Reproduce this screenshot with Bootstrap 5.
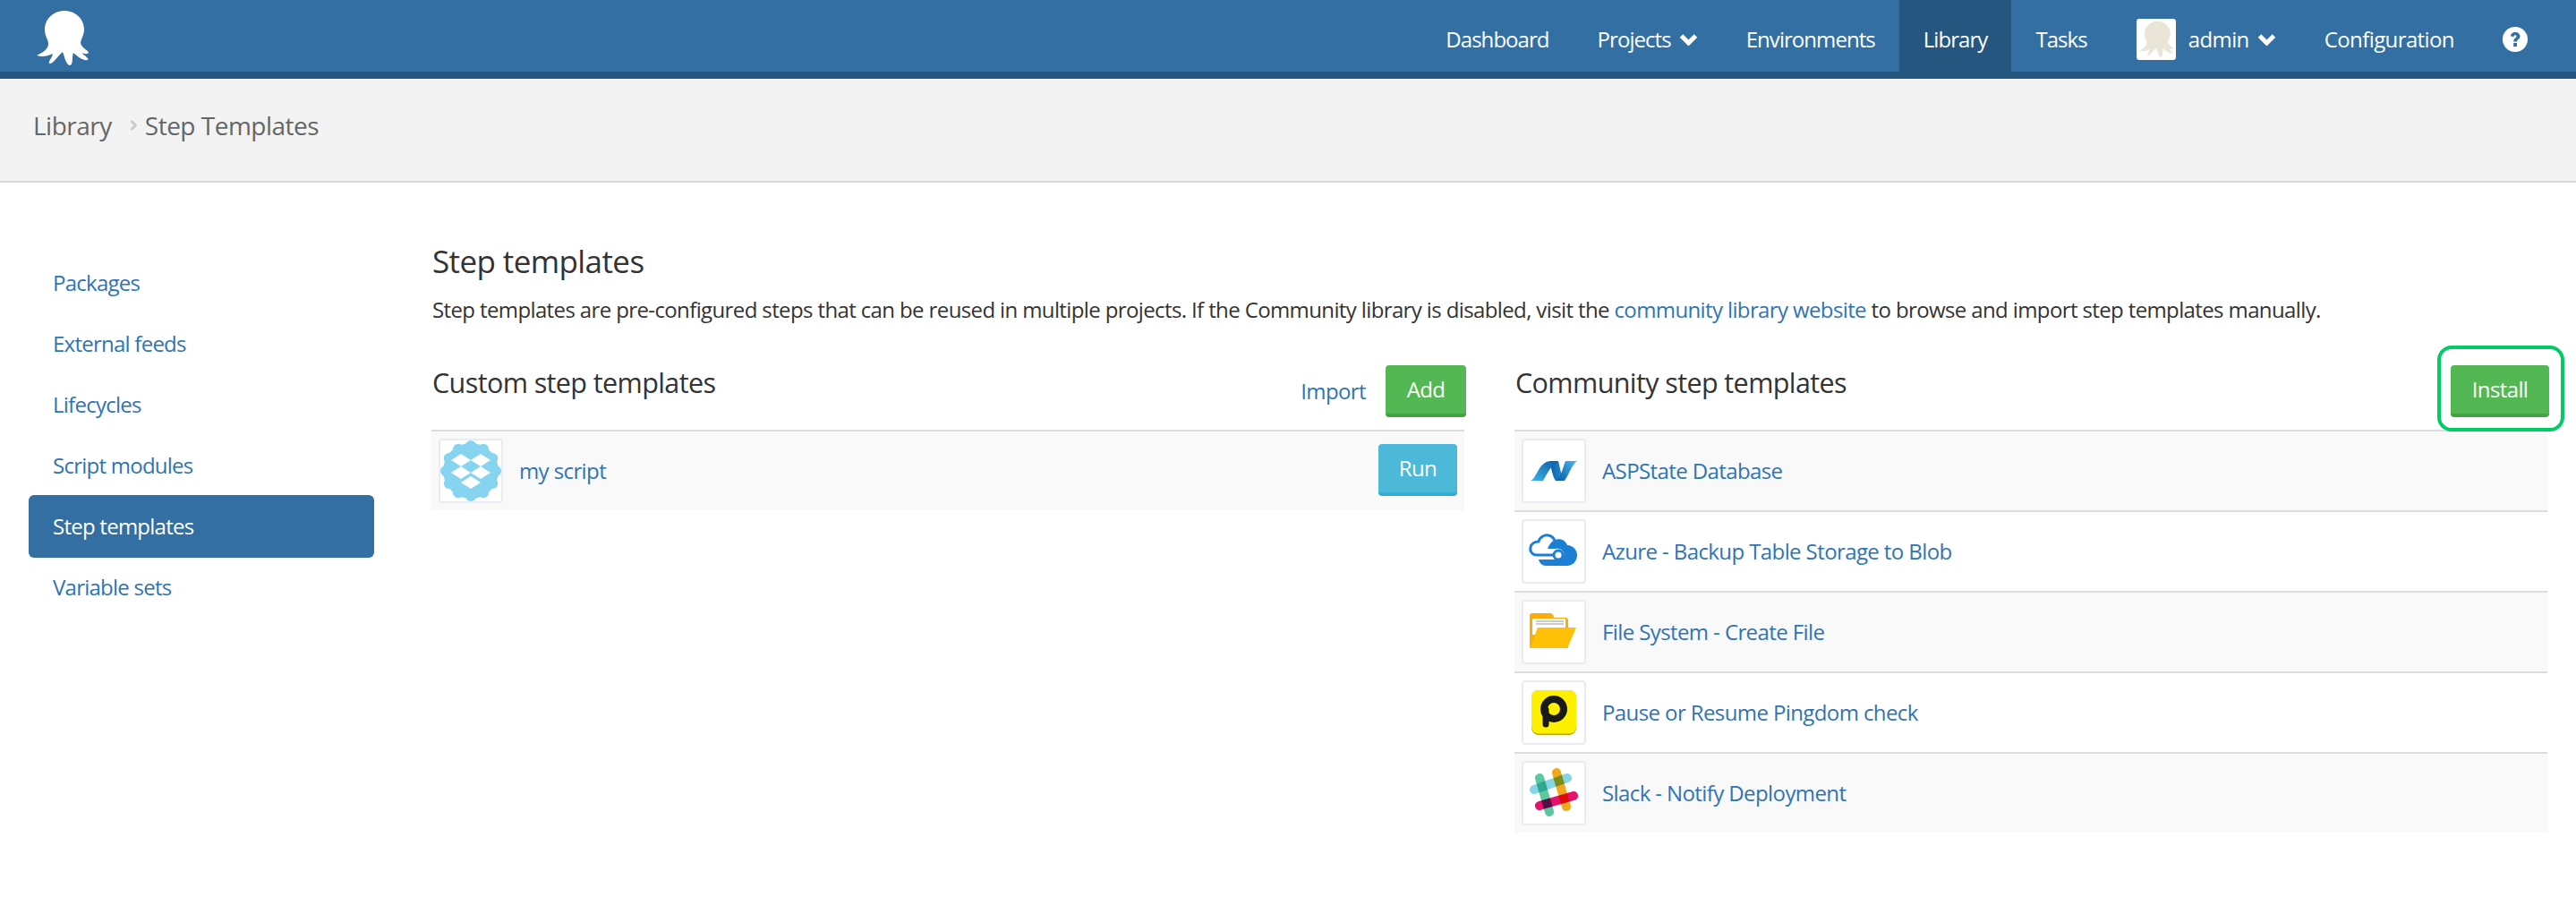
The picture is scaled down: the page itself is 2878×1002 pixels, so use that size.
<!DOCTYPE html>
<html lang="en">
<head>
    <meta charset="UTF-8">
    <meta name="viewport" content="width=device-width, initial-scale=1.0">
    <title>Step Templates</title>
    <link href="https://cdn.jsdelivr.net/npm/bootstrap@5.3.2/dist/css/bootstrap.min.css" rel="stylesheet">
    <script src="https://cdn.jsdelivr.net/npm/bootstrap@5.3.2/dist/js/bootstrap.bundle.min.js"></script>
    <style>
        body { font-family: "Open Sans", sans-serif; font-size: 24px; color: #333; letter-spacing: -0.6px; }
        a { color: #2f74b5; text-decoration: none; }

        .top-bar { height: 88px; background: #336fa2; border-bottom: 8px solid #24567f; padding: 0 54px 0 40px; }
        .top-bar .logo-svg { width: 60px; height: 62px; margin-top: 12px; }
        .top-links { height: 80px; letter-spacing: -0.95px; }
        .top-links a { color: #fff; padding: 0 27px; height: 88px; display: flex; align-items: center; gap: 9px; }
        .top-links a.on { background: #24567f; }
        .top-links a.user-link { padding-left: 28px; letter-spacing: -0.6px; }
        .top-links a.conf-link { letter-spacing: -0.6px; }
        .top-links a.help-link { padding-right: 0; }
        .avatar-box { width: 44px; height: 46px; background: #fff; border-radius: 3px; display: block; margin-right: 5px; }
        .help-svg { width: 28px; height: 28px; }
        .chev { width: 21px; height: 14px; }

        .crumb-bar { height: 116px; background: #f3f3f3; border-bottom: 2px solid #d8d8d8; padding-left: 37px; padding-bottom: 11px; font-size: 28px; color: #666; letter-spacing: -0.5px; }
        .crumb-sep { width: 8px; height: 14px; margin: 0 9px 0 20px; }

        .side-col { width: 386px; margin-left: 32px; margin-right: 64px; padding-top: 78px; letter-spacing: -0.75px; }
        .side-col a { display: flex; align-items: center; height: 68px; padding-left: 27px; border-radius: 6px; }
        .side-col a.on { background: #336fa2; color: #fff; height: 70px; margin: -1px 0; }

        .body-col { width: 2364px; }
        .page-title { font-size: 35px; font-weight: 400; margin: 67px 0 0; line-height: 42px; padding-left: 1px; }
        .page-intro { margin: 16px 0 0; line-height: 34px; letter-spacing: -0.62px; padding-left: 1px; }
        .two-cols { --bs-gutter-x: 56px; margin-top: 0; }
        .head-row { height: 117px; padding-top: 45px; position: relative; }
        .head-row h3 { font-size: 30.5px; font-weight: 400; margin: -2px 0 0; line-height: 42px; padding-left: 1px; }
        .head-tools { gap: 22px; }
        .btn-flat { height: 58px; color: #fff; border: 0; font-size: 24px; border-radius: 4px; padding: 0; letter-spacing: -0.6px; }
        .btn-flat:hover { color: #fff; }
        .btn-add { width: 90px; margin-right: -2px; background: #53b853; border-bottom: 4px solid #45a345; }
        .btn-add:hover { background: #53b853; border-bottom: 4px solid #45a345; }
        .btn-inst { width: 110px; margin-right: -2px; background: #53b853; border-bottom: 4px solid #45a345; }
        .btn-inst:hover { background: #53b853; border-bottom: 4px solid #45a345; }
        .btn-run { width: 88px; background: #4db9d9; border-bottom: 4px solid #31add1; }
        .btn-run:hover { background: #4db9d9; border-bottom: 4px solid #31add1; }
        .green-ring { position: absolute; right: -19px; top: 23px; width: 142px; height: 96px; border: 4px solid #00cc66; border-radius: 16px; }

        .step-row { height: 90px; border-top: 2px solid #dcdcdc; padding: 8px 8px 0 8px; display: flex; align-items: flex-start; gap: 18px; }
        .step-row.odd { background: #f9f9f9; }
        .step-row .step-name { line-height: 72px; }
        .icon-box { width: 72px; height: 72px; background: #fff; border: 2px solid #e8ecf1; border-radius: 4px; flex: none; }
        .icon-box svg { display: block; width: 68px; height: 68px; }
        .run-wrap { margin-left: auto; padding-top: 6px; }
        .slack-bar { mix-blend-mode: multiply; }
    </style>
</head>
<body>
    <nav class="top-bar d-flex justify-content-between">
        <svg class="logo-svg" viewBox="39 12 60 62"><path fill="#fff" d="M71 12C59 12 49 21 49 33C49 41 53 44 53 49C53 55 46 59 40 62C46 64 51 63 58 60C57 65 53 68 54 71C58 72 63 63 69 58C71 63 73 73 77 73C81 73 79 64 81 59C86 63 91 68 97 67C99 65 93 62 90 59C93 60 96 61 98 59C98 56 90 54 89 48C90 42 93 39 93 33C93 21 83 12 71 12Z"/></svg>
        <div class="top-links d-flex">
            <a href="#">Dashboard</a>
            <a href="#">Projects <svg class="chev" viewBox="0 0 21 14"><path d="M2.5 3l8 8 8-8" fill="none" stroke="#fff" stroke-width="5"/></svg></a>
            <a href="#">Environments</a>
            <a href="#" class="on">Library</a>
            <a href="#">Tasks</a>
            <a href="#" class="user-link"><span class="avatar-box"><svg viewBox="39 8 60 70" width="44" height="46"><path fill="#e9e6d9" d="M71 12C59 12 49 21 49 33C49 41 53 44 53 49C53 55 46 59 40 62C46 64 51 63 58 60C57 65 53 68 54 71C58 72 63 63 69 58C71 63 73 73 77 73C81 73 79 64 81 59C86 63 91 68 97 67C99 65 93 62 90 59C93 60 96 61 98 59C98 56 90 54 89 48C90 42 93 39 93 33C93 21 83 12 71 12Z"/></svg></span><span>admin</span> <svg class="chev" viewBox="0 0 21 14"><path d="M2.5 3l8 8 8-8" fill="none" stroke="#fff" stroke-width="5"/></svg></a>
            <a href="#" class="conf-link">Configuration</a>
            <a href="#" class="help-link"><svg class="help-svg" viewBox="0 0 28 28"><circle cx="14" cy="14" r="14" fill="#fff"/><path d="M9 10.5C9 7.5 11.500 6 14.200 6C17 6 19.500 7.800 19.500 10.500C19.500 13.800 16 14 16 16.500H12.200C12.200 12.800 15.500 12.500 15.500 10.600C15.500 9.700 15 9.200 14.100 9.200C13.100 9.200 12.600 10 12.400 11Z" fill="#336fa2"/><rect x="12.200" y="18" width="3.800" height="4" fill="#336fa2"/></svg></a>
        </div>
    </nav>

    <div class="crumb-bar d-flex align-items-center">
        <span>Library</span>
        <svg class="crumb-sep" viewBox="0 0 8 14"><path d="M1.5 2l5 5-5 5" fill="none" stroke="#ccc" stroke-width="3"/></svg>
        <span>Step Templates</span>
    </div>

    <div class="d-flex">
        <div class="side-col">
            <a href="#">Packages</a>
            <a href="#">External feeds</a>
            <a href="#">Lifecycles</a>
            <a href="#">Script modules</a>
            <a href="#" class="on">Step templates</a>
            <a href="#">Variable sets</a>
        </div>
        <div class="body-col">
            <h2 class="page-title">Step templates</h2>
            <p class="page-intro">Step templates are pre-configured steps that can be reused in multiple projects. If the Community library is disabled, visit the <a href="#">community library website</a> to browse and import step templates manually.</p>
            <div class="row two-cols">
                <div class="col-6">
                    <div class="head-row d-flex justify-content-between align-items-start">
                        <h3>Custom step templates</h3>
                        <div class="d-flex align-items-center head-tools">
                            <a href="#">Import</a>
                            <button class="btn btn-flat btn-add">Add</button>
                        </div>
                    </div>
                    <div class="step-row odd">
                        <span class="icon-box">
                            <svg viewBox="0 0 68 68">
                                <g fill="#87d4f0"><circle cx="34" cy="34" r="31"/>
                                <circle cx="34" cy="6" r="6"/><circle cx="48" cy="9.750" r="6"/><circle cx="58.250" cy="20" r="6"/><circle cx="62" cy="34" r="6"/><circle cx="58.250" cy="48" r="6"/><circle cx="48" cy="58.250" r="6"/><circle cx="34" cy="62" r="6"/><circle cx="20" cy="58.250" r="6"/><circle cx="9.750" cy="48" r="6"/><circle cx="6" cy="34" r="6"/><circle cx="9.750" cy="20" r="6"/><circle cx="20" cy="9.750" r="6"/></g>
                                <g fill="#fff"><path d="M12 22l11-7 11 7-11 7z"/><path d="M34 22l11-7 11 7-11 7z"/><path d="M12 36l11-7 11 7-11 7z"/><path d="M34 36l11-7 11 7-11 7z"/><path d="M23 47l11-7 11 7-11 7z"/></g>
                            </svg>
                        </span>
                        <a href="#" class="step-name">my script</a>
                        <div class="run-wrap"><button class="btn btn-flat btn-run">Run</button></div>
                    </div>
                </div>
                <div class="col-6">
                    <div class="head-row d-flex justify-content-between align-items-start">
                        <h3>Community step templates</h3>
                        <button class="btn btn-flat btn-inst">Install</button>
                        <span class="green-ring"></span>
                    </div>
                    <div class="step-row odd">
                        <span class="icon-box">
                            <svg viewBox="0 0 68 68">
                                <defs><linearGradient id="netA" x1="0" y1="1" x2="1" y2="0"><stop offset="0" stop-color="#3db4ee"/><stop offset="1" stop-color="#0b5aa3"/></linearGradient><linearGradient id="netB" x1="0" y1="0" x2="1" y2="0"><stop offset="0" stop-color="#0b5aa3"/><stop offset="1" stop-color="#1f8fd8"/></linearGradient><linearGradient id="netC" x1="0" y1="1" x2="1" y2="0"><stop offset="0" stop-color="#0b5aa3"/><stop offset="1" stop-color="#45b8ef"/></linearGradient></defs>
                                <path fill="url(#netB)" d="M28 24L39 23C41 30 42 40 46 45L36 45C32 40 32 30 28 24Z"/>
                                <path fill="url(#netA)" d="M8 45C15 42 17 24 30 23L39 23C32 26 26 38 22 45Z"/>
                                <path fill="url(#netC)" d="M36 45C42 42 44 30 47 23L60 23C54 27 51 38 46 45Z"/>
                            </svg>
                        </span>
                        <a href="#" class="step-name">ASPState Database</a>
                    </div>
                    <div class="step-row">
                        <span class="icon-box">
                            <svg viewBox="0 0 68 68">
                                <path fill="none" stroke="#1c7fd6" stroke-width="3" d="M36 38H15C9 38 7 33 8 29C9 25 13 23 17 23C18 18 24 15 28 16C32 17 34 19 35 22"/>
                                <path fill="#1c7fd6" d="M35 21C42 19 47 22 49 27C55 27 60 32 60 38C60 45 55 50 49 50H25C21 50 18 47 17 43H38C44 44 46 39 45 35C43 31 39 30 36 31L27 31C29 26 31 23 35 21Z"/>
                                <circle cx="39" cy="38" r="5" fill="#fff" stroke="#1c7fd6" stroke-width="3"/>
                            </svg>
                        </span>
                        <a href="#" class="step-name">Azure - Backup Table Storage to Blob</a>
                    </div>
                    <div class="step-row odd">
                        <span class="icon-box">
                            <svg viewBox="0 0 68 68">
                                <path fill="#ffa90a" d="M7 15C7 14 8 13 10 13H30C32 13 34 15 34 18H47C49 18 50 19 50 21V52H7Z"/>
                                <path fill="#fff" d="M10 19H47V37H10Z"/>
                                <path stroke="#999" stroke-width="1" d="M14 22H45M14 25H45"/>
                                <path fill="#ffc107" d="M16 29H59L50 50C50 51 49 52 47 52H7Z"/>
                            </svg>
                        </span>
                        <a href="#" class="step-name">File System - Create File</a>
                    </div>
                    <div class="step-row">
                        <span class="icon-box">
                            <svg viewBox="0 0 68 68">
                                <rect x="9" y="9" width="50" height="50" rx="8" fill="#b5a800"/>
                                <rect x="9" y="9" width="50" height="48.500" rx="8" fill="#fff000"/>
                                <circle cx="34" cy="30" r="11" fill="none" stroke="#1a1a1a" stroke-width="8"/>
                                <path d="M25 31V47" fill="none" stroke="#1a1a1a" stroke-width="7" stroke-linecap="round"/>
                            </svg>
                        </span>
                        <a href="#" class="step-name">Pause or Resume Pingdom check</a>
                    </div>
                    <div class="step-row odd">
                        <span class="icon-box">
                            <svg viewBox="0 0 68 68" style="isolation:isolate">
                                <g fill="none" stroke-width="10" stroke-linecap="round">
                                    <path class="slack-bar" stroke="#5bc8a0" d="M18 17L29 55"/>
                                    <path class="slack-bar" stroke="#f0a81e" d="M37 11L48 49"/>
                                    <path class="slack-bar" stroke="#85d6e5" d="M12 30L49 17"/>
                                    <path class="slack-bar" stroke="#e8116a" d="M18 48L56 37"/>
                                </g>
                            </svg>
                        </span>
                        <a href="#" class="step-name">Slack - Notify Deployment</a>
                    </div>
                </div>
            </div>
        </div>
    </div>
</body>
</html>
